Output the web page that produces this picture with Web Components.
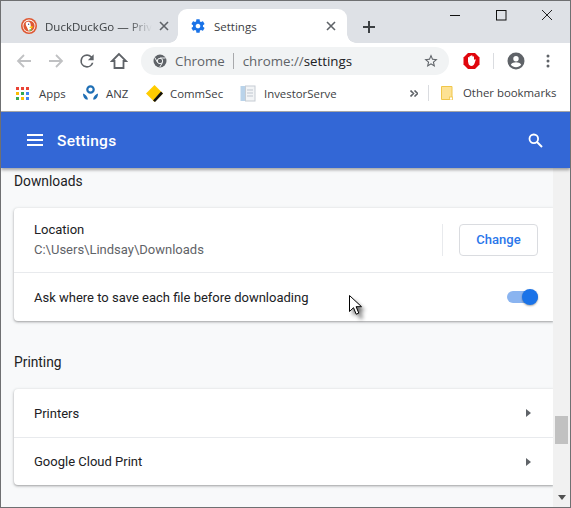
<!DOCTYPE html>
<html><head><meta charset="utf-8"><style>
html,body{margin:0;padding:0;background:#fff}
body{width:571px;height:508px;overflow:hidden;font-family:"Open Sans","Noto Sans",sans-serif}
</style></head><body>
<browser-window>
  <tab-strip></tab-strip>
  <nav-toolbar></nav-toolbar>
  <bookmark-bar></bookmark-bar>
  <settings-header></settings-header>
  <settings-page>
    <settings-section heading="Downloads" style="--head-top:4px">
      <location-row></location-row>
      <toggle-row label="Ask where to save each file before downloading"></toggle-row>
    </settings-section>
    <settings-section heading="Printing" style="--head-top:32px">
      <link-row label="Printers"></link-row>
      <link-row label="Google Cloud Print"></link-row>
    </settings-section>
  </settings-page>
  <mouse-cursor></mouse-cursor>
</browser-window>
<script>
function def(name, html){
  customElements.define(name, class extends HTMLElement{
    connectedCallback(){
      if(this.shadowRoot) return;
      const r=this.attachShadow({mode:'open'});
      r.innerHTML=typeof html==='function'?html(this):html;
    }
  });
}
def('browser-window',`<style>
:host{display:flex;flex-direction:column;width:571px;height:508px;box-sizing:border-box;position:relative;border:1px solid #6f7072;overflow:hidden;background:#fff}
</style><slot></slot>`);

def('tab-strip',`<style>
:host{display:flex;height:42px;flex:none;background:#dee1e6;align-items:flex-end;position:relative;font:11.5px "Open Sans","Noto Sans",sans-serif;color:#3c4043}
.tab{height:34px;display:flex;align-items:center;box-sizing:border-box;position:relative}
.t1{width:177px;padding-left:20px}
.t2{width:169px;background:#fff;border-radius:9px 9px 0 0;padding-left:12px}
.t2::after{content:"";position:absolute;right:-9px;bottom:0;width:9px;height:9px;background:radial-gradient(circle at 100% 0,transparent 8.5px,#fff 9px)}
.t2::before{content:"";position:absolute;left:-9px;bottom:0;width:9px;height:9px;background:radial-gradient(circle at 0 0,transparent 8.5px,#fff 9px)}
.lab{margin-left:8px;white-space:nowrap;position:relative}
.t1 .lab{flex:none;-webkit-mask-image:linear-gradient(90deg,#000 78%,transparent)}
.x{margin-left:auto;width:10px;height:10px;margin-right:11px;flex:none}
.plus{margin-left:15px;margin-bottom:9px;width:14px;height:14px}
.win{position:absolute;top:0;right:0;display:flex}
.win svg{display:block}
</style>
<div class="tab t1">
<svg width="16" height="16" viewBox="0 0 16 16"><circle cx="8" cy="8" r="8" fill="#de5833"/><circle cx="8" cy="8" r="6.4" fill="#fff"/><circle cx="8" cy="8" r="5.6" fill="#de5833"/><path d="M5 4.500c1.500-1.500 4-1 4.500 1 .4 1.600.2 3 .6 5 .2 1 0 2-1 2.300-1 .2-2-.3-2.300-1.500C6.400 9.500 5 8 4.800 6.500 4.700 5.700 4.700 5 5 4.500z" fill="#fff"/><circle cx="7.600" cy="6.300" r=".7" fill="#2d4f8e"/><path d="M8.500 9l3-1-.2 2.200-2.600-.2z" fill="#fdd20a"/><path d="M8.200 11.500l2.300-.4.300 1.500-2.200.6z" fill="#65bc46"/></svg>
<span class="lab">DuckDuckGo — Priv</span>
<svg class="x" style="margin-right:9px" viewBox="0 0 10 10"><path d="M1 1l8 8M9 1l-8 8" stroke="#5f6368" stroke-width="1.600"/></svg>
</div>
<div class="tab t2">
<svg width="16" height="16" viewBox="0 0 24 24"><path fill="#1a73e8" d="M19.430 12.980c.04-.32.07-.64.07-.98s-.03-.66-.07-.98l2.110-1.650c.19-.15.24-.42.120-.64l-2-3.460c-.12-.22-.39-.3-.61-.22l-2.490 1c-.52-.4-1.080-.73-1.690-.98l-.38-2.650C14.460 2.180 14.250 2 14 2h-4c-.25 0-.46.18-.49.420l-.38 2.650c-.61.25-1.170.59-1.690.98l-2.490-1c-.23-.09-.49 0-.61.22l-2 3.460c-.13.22-.07.49.12.64l2.110 1.650c-.04.32-.07.65-.07.98s.03.66.07.98l-2.110 1.650c-.19.15-.24.42-.12.64l2 3.460c.12.22.39.3.61.22l2.490-1c.52.4 1.080.73 1.690.98l.38 2.650c.03.24.24.42.49.42h4c.25 0 .46-.18.49-.42l.38-2.650c.61-.25 1.170-.59 1.690-.98l2.490 1c.23.09.49 0 .61-.22l2-3.460c.12-.22.07-.49-.12-.64l-2.110-1.650zM12 15.500c-1.930 0-3.500-1.570-3.500-3.500s1.570-3.500 3.500-3.500 3.500 1.570 3.500 3.500-1.570 3.500-3.500 3.500z"/></svg>
<span class="lab">Settings</span>
<svg class="x" viewBox="0 0 10 10"><path d="M1 1l8 8M9 1l-8 8" stroke="#5f6368" stroke-width="1.600"/></svg>
</div>
<svg class="plus" viewBox="0 0 14 14"><path d="M7 1v12M1 7h12" stroke="#3c4043" stroke-width="2"/></svg>
<div class="win">
<svg width="46" height="30" viewBox="0 0 46 30"><path d="M17 14.500h10" stroke="#111" stroke-width="1"/></svg>
<svg width="46" height="30" viewBox="0 0 46 30"><rect x="17.500" y="9.500" width="9.500" height="9.500" fill="none" stroke="#111"/></svg>
<svg width="45" height="30" viewBox="0 0 45 30"><path d="M17 9l10 10M27 9L17 19" stroke="#222" stroke-width="1"/></svg>
</div>`);

def('nav-toolbar',`<style>
:host{display:flex;height:35px;flex:none;background:#fff;align-items:center;position:relative;font:13.3px "Open Sans","Noto Sans",sans-serif}
svg{display:block;flex:none}
.omni{position:absolute;left:140px;top:4px;width:308px;height:28px;border-radius:14px;background:#f1f3f4;display:flex;align-items:center;box-sizing:border-box;padding-left:12px;color:#5f6368;white-space:nowrap}
.sep{width:1px;height:16px;background:#a8a9ac;margin:0 9px 0 8px}
.url b{font-weight:400;color:#202124}
.ic{position:absolute;top:50%;transform:translateY(-50%)}
</style>
<svg class="ic" style="left:15px" width="16" height="16" viewBox="0 0 16 16"><path d="M15 8H2M8 2L2 8l6 6" fill="none" stroke="#c0c1c3" stroke-width="1.800"/></svg>
<svg class="ic" style="left:47px" width="16" height="16" viewBox="0 0 16 16"><path d="M1 8h13M8 2l6 6-6 6" fill="none" stroke="#c0c1c3" stroke-width="1.800"/></svg>
<svg class="ic" style="left:76px" width="20" height="20" viewBox="0 0 24 24"><path fill="#5f6368" d="M17.650 6.350A7.960 7.960 0 0 0 12 4a8 8 0 1 0 7.730 10h-2.080A6 6 0 1 1 12 6c1.660 0 3.140.69 4.220 1.780L13 11h7V4l-2.350 2.350z"/></svg>
<svg class="ic" style="left:109px" width="18" height="18" viewBox="0 0 18 18"><path d="M9 2L2 9h2.500v7h9V9H16z" fill="none" stroke="#5f6368" stroke-width="1.800"/></svg>
<div class="omni">
<svg width="14" height="14" viewBox="0 0 14 14" style="margin-right:8px"><circle cx="7" cy="7" r="6.500" fill="#5f6368"/><circle cx="7" cy="7" r="2.700" fill="#5f6368" stroke="#f1f3f4" stroke-width="1"/><path d="M7 4h5.500M4.500 8.500L1.800 3.500M9.500 8.500L6.800 13" stroke="#f1f3f4" stroke-width="1"/></svg>
<span>Chrome</span><span class="sep"></span><span class="url">chrome://<b>settings</b></span>
<svg class="ic" style="right:10px" width="16" height="16" viewBox="0 0 24 24"><path fill="#5f6368" d="M22 9.240l-7.190-.62L12 2 9.190 8.630 2 9.240l5.460 4.730L5.820 21 12 17.270 18.180 21l-1.630-7.030L22 9.240zM12 15.400l-3.760 2.270 1-4.280-3.320-2.880 4.380-.38L12 6.100l1.710 4.040 4.380.38-3.320 2.880 1 4.280L12 15.400z"/></svg>
</div>
<svg class="ic" style="left:462px" width="17" height="17" viewBox="0 0 17 17"><path d="M5 .5h7L16.500 5v7L12 16.500H5L.5 12V5z" fill="#e0060d"/><path d="M5 9V5.200a.75.75 0 0 1 1.500 0V4a.75.75 0 0 1 1.500 0v-.4a.75.75 0 0 1 1.500 0v.8a.75.75 0 0 1 1.500 0V7.500l.6-.6c.6-.5 1.300.1 1 .8L11.500 11c-.6 1.500-1.500 2.500-3 2.500-1.700 0-2.500-.9-3-2.200z" fill="#fff"/></svg>
<div class="ic" style="left:492px;width:1px;height:16px;background:#dadce0"></div>
<svg class="ic" style="left:506px" width="18" height="18" viewBox="0 0 18 18"><circle cx="9" cy="9" r="8.500" fill="#5f6368"/><circle cx="9" cy="6.700" r="2.700" fill="#fff"/><path d="M3.800 12.800c1-1.800 3.200-2.500 5.200-2.500s4.200.7 5.200 2.500c-1.200 1.500-3.100 2.500-5.200 2.500s-4-1-5.200-2.500z" fill="#fff"/></svg>
<svg class="ic" style="left:545px" width="4" height="14" viewBox="0 0 4 14"><circle cx="2" cy="2" r="1.500" fill="#5f6368"/><circle cx="2" cy="7" r="1.500" fill="#5f6368"/><circle cx="2" cy="12" r="1.500" fill="#5f6368"/></svg>`);

def('bookmark-bar',`<style>
:host{display:block;height:33px;flex:none;background:#fff;border-bottom:1px solid #a9a9a9;position:relative;font:11.4px "Open Sans","Noto Sans",sans-serif;color:#3c4043}
.row{display:flex;align-items:center;height:30px;white-space:nowrap;padding-left:15px}
svg{display:block;flex:none}
.i{display:flex;align-items:center}
.sep{width:1px;height:16px;background:#dadce0}
</style><div class="row">
<div class="i" style="width:66px"><svg width="13" height="13" viewBox="0 0 13 13">
<rect x="0" y="0" width="3" height="3" fill="#ea4335"/><rect x="5" y="0" width="3" height="3" fill="#ea4335"/><rect x="10" y="0" width="3" height="3" fill="#ea4335"/>
<rect x="0" y="5" width="3" height="3" fill="#fbbc04"/><rect x="5" y="5" width="3" height="3" fill="#34a853"/><rect x="10" y="5" width="3" height="3" fill="#4285f4"/>
<rect x="0" y="10" width="3" height="3" fill="#34a853"/><rect x="5" y="10" width="3" height="3" fill="#fbbc04"/><rect x="10" y="10" width="3" height="3" fill="#4285f4"/></svg><span style="margin-left:10px">Apps</span></div>
<div class="i" style="width:64px"><svg width="17" height="17" viewBox="0 0 17 17"><circle cx="8.500" cy="4.500" r="3.200" fill="none" stroke="#1f6fb5" stroke-width="2.200"/><path d="M1 8.500c2 .5 4.500 2.500 5 6-2.800.5-5-2-5-6zM16 8.500c-2 .5-4.500 2.500-5 6 2.800.5 5-2 5-6z" fill="#1f6fb5"/></svg><span style="margin-left:7px">ANZ</span></div>
<div class="i" style="width:94px"><svg width="17" height="17" viewBox="0 0 17 17"><path d="M8.500 0L17 8.500 8.500 17 0 8.500z" fill="#fc0"/><path d="M15 6.500l2 2-8 8.500-2-1.500z" fill="#111"/></svg><span style="margin-left:7px">CommSec</span></div>
<div class="i"><svg width="16" height="17" viewBox="0 0 16 17"><rect x=".5" y="1" width="6" height="15" fill="#b9d3ea"/><rect x="5.500" y="1" width="9.500" height="15" fill="#f2f4f6" stroke="#c6ccd3"/><path d="M7 5h6M7 8h6M7 11h6" stroke="#bfc6cf"/></svg><span style="margin-left:8px">InvestorServe</span></div>
</div>
<svg style="position:absolute;left:409px;top:12px" width="8" height="7" viewBox="0 0 8 7"><path d="M.5 .5L3.500 3.500 .5 6.500M4.500 .5L7.500 3.500 4.500 6.500" fill="none" stroke="#5f6368" stroke-width="1.600"/></svg>
<div class="sep" style="position:absolute;left:427px;top:7px"></div>
<svg style="position:absolute;left:440px;top:8px" width="12" height="14" viewBox="0 0 12 14"><path d="M.5 .5h10.500v13H.5z" fill="#fde293" stroke="#f0c64a"/><rect x="8.500" y="11" width="3" height="3" fill="#fff" stroke="#f0c64a" stroke-width=".8"/></svg>
<span style="position:absolute;left:462px;top:7px;white-space:nowrap">Other bookmarks</span>`);

def('settings-header',`<style>
:host{display:flex;height:56px;flex:none;background:#3367d6;align-items:center;color:#fff;font:500 15.5px Roboto,sans-serif;box-shadow:0 2px 3px rgba(0,0,0,.35);position:relative;z-index:2;padding-left:26px;box-sizing:border-box}
svg{display:block;flex:none}
span{margin-left:14px;letter-spacing:.25px;padding-top:1px}
</style>
<svg width="16" height="12" viewBox="0 0 16 12"><path d="M0 1h16M0 6h16M0 11h16" stroke="#fff" stroke-width="1.800"/></svg>
<span>Settings</span>
<svg style="margin-left:auto;margin-right:27px" width="15" height="15" viewBox="0 0 15 15"><circle cx="5.800" cy="5.800" r="4.300" fill="none" stroke="#fff" stroke-width="1.800"/><path d="M9 9l5 5" stroke="#fff" stroke-width="2"/></svg>`);

def('settings-page',`<style>
:host{display:grid;grid-template-columns:1fr 17px;flex:1;min-height:0;background:#f8f9fa;overflow:hidden}
.c{padding:0 0 0 13px;min-width:0}
.sb{background:#f1f1f1;position:relative}
.th{position:absolute;left:2px;right:2px;top:248px;height:28px;background:#c1c1c1}
.ar{position:absolute;left:5px;bottom:7px;width:0;height:0;border:4px solid transparent;border-top:5px solid #505050;border-bottom:0}
</style><div class="c"><slot></slot></div><div class="sb"><div class="th"></div><div class="ar"></div></div>`);

def('settings-section',h=>`<style>
:host{display:block}
h2{margin:0;font:400 13.8px/18px Roboto,sans-serif;color:#202124;padding-top:var(--head-top,0);padding-bottom:18px}
.card{background:#fff;border-radius:4px 0 0 4px;box-shadow:0 1px 2px rgba(60,64,67,.35),0 1px 3px 1px rgba(60,64,67,.12)}
</style><h2>${h.getAttribute('heading')}</h2><div class="card"><slot></slot></div>`);

const rowFont='font:400 13px Roboto,sans-serif;color:#202124';
def('location-row',`<style>
:host{display:flex;height:64px;align-items:center;box-sizing:border-box;padding-left:20px;${rowFont}}
.t{flex:1;line-height:20px}.s{color:#5f6368;font-size:13px}
.sep{width:1px;height:32px;background:#e8eaed;margin-right:16px}
.b{width:79px;height:32px;box-sizing:border-box;border:1px solid #dadce0;border-radius:4px;color:#2a76ea;font:500 13px/30px Roboto,sans-serif;text-align:center;margin-right:15px}
</style><div class="t"><div>Location</div><div class="s">C:\\Users\\Lindsay\\Downloads</div></div><div class="sep"></div><div class="b">Change</div>`);

def('toggle-row',h=>`<style>
:host{display:flex;height:49px;align-items:center;box-sizing:border-box;padding-left:20px;border-top:1px solid #e8eaed;${rowFont}}
.tg{margin-left:auto;margin-right:15px;width:31px;height:14px;position:relative}
.tr{position:absolute;left:0;right:0;top:1px;height:12px;background:#8ab4f0;border-radius:6px}
.kn{position:absolute;right:0;top:-1px;width:16px;height:16px;border-radius:50%;background:#1a73e8;box-shadow:0 1px 2px rgba(0,0,0,.35)}
</style><span>${h.getAttribute('label')}</span><div class="tg"><div class="tr"></div><div class="kn"></div></div>`);

def('link-row',h=>`<style>
:host{display:flex;height:48px;align-items:center;box-sizing:border-box;padding-left:20px;${rowFont}}
:host(:not(:first-child)){border-top:1px solid #e8eaed}
i{margin-left:auto;margin-right:22px;width:0;height:0;border:4.5px solid transparent;border-left:5px solid #5f6368;border-right:0}
</style><span>${h.getAttribute('label')}</span><i></i>`);

def('mouse-cursor',`<style>
:host{position:absolute;left:347px;top:294px;width:24px;height:30px;display:block;z-index:5}
svg{display:block;overflow:visible}
</style><svg width="24" height="30" viewBox="0 0 24 30"><defs><filter id="b" x="-50%" y="-50%" width="200%" height="200%"><feGaussianBlur stdDeviation="2"/></filter></defs>
<path d="M5 5v16l4-4 3 7 3-1-3-7h5z" fill="#000" opacity=".6" filter="url(#b)"/>
<path d="M1.500 .5v16l4-3.800 2.700 6.500 2.600-1.100-2.700-6.400h5.400z" fill="#fff" stroke="#000" stroke-width="1"/></svg>`);
</script>
</body></html>
